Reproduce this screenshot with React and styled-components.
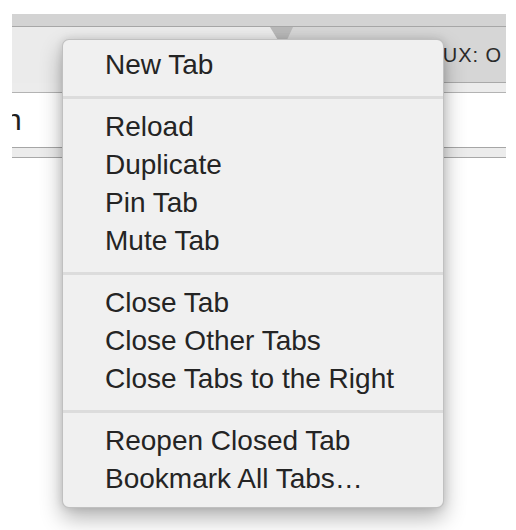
import React from 'react'
import styled, { createGlobalStyle } from 'styled-components'

const GlobalStyle = createGlobalStyle`
  html, body {
    margin: 0;
    background: #ffffff;
    font-family: "Liberation Sans", Arial, sans-serif;
  }
`

const Page = styled.div`
  position: relative;
  width: 516px;
  height: 530px;
  overflow: hidden;
  background: #ffffff;
`

const Browser = styled.div`
  margin: 14px 10px 0 12px;
  width: 494px;
`

const TitleBand = styled.div`
  height: 12px;
  background: #d3d3d3;
  border-bottom: 1px solid #a7a7a7;
`

const TabRow = styled.div`
  display: flex;
  height: 56px;
  background: #b9b9b9;
`

const ActiveTab = styled.div`
  position: relative;
  z-index: 1;
  flex: 0 0 292px;
  background: #ebebeb;
  clip-path: polygon(0 0, 258px 0, 100% 100%, 0 100%);
`

const InactiveTab = styled.div`
  flex: 1;
  min-width: 0;
  margin-left: -37px;
  box-sizing: border-box;
  display: flex;
  align-items: center;
  padding: 2px 4px 0 92px;
  background: #d6d6d6;
  border-bottom: 1px solid #a9a9a9;
  clip-path: polygon(26px 0, 100% 0, 100% 100%, 0 100%);
`

const TabTitle = styled.span`
  flex: 1;
  min-width: 0;
  overflow: hidden;
  white-space: nowrap;
  font-size: 20px;
  letter-spacing: 1px;
  color: #2b2b2b;
`

const Toolbar = styled.div`
  background: #ececec;
  padding-top: 9px;
`

const AddressBar = styled.div`
  display: flex;
  align-items: center;
  height: 54px;
  background: #ffffff;
  border-top: 1px solid #b3b3b3;
  border-bottom: 1px solid #a6a6a6;
  overflow: hidden;
`

const UrlText = styled.span`
  margin-left: -7px;
  font-size: 30px;
  color: #1f1f1f;
`

const ToolbarFoot = styled.div`
  height: 9px;
  background: #ececec;
  border-bottom: 1px solid #a8a8a8;
`

const Menu = styled.div`
  position: absolute;
  z-index: 5;
  left: 62px;
  top: 39px;
  width: 382px;
  box-sizing: border-box;
  padding: 6px 0 9px;
  background: #f0f0f0;
  border: 1px solid rgba(0, 0, 0, 0.2);
  border-radius: 7px;
  box-shadow: 0 10px 22px rgba(0, 0, 0, 0.3), 0 0 8px rgba(0, 0, 0, 0.12);
`

const Item = styled.div`
  height: 38px;
  line-height: 38px;
  padding-left: 42px;
  font-size: 28px;
  color: #242424;
  white-space: nowrap;
`

const Separator = styled.div`
  height: 3px;
  margin: 12px 0 9px;
  background: #dcdcdc;
`

const sections = [
  ['New Tab'],
  ['Reload', 'Duplicate', 'Pin Tab', 'Mute Tab'],
  ['Close Tab', 'Close Other Tabs', 'Close Tabs to the Right'],
  ['Reopen Closed Tab', 'Bookmark All Tabs…'],
]

const App = () => (
  <Page>
    <GlobalStyle />
    <Browser>
      <TitleBand />
      <TabRow>
        <ActiveTab />
        <InactiveTab>
          <TabTitle>Chrome UX: Options</TabTitle>
        </InactiveTab>
      </TabRow>
      <Toolbar>
        <AddressBar>
          <UrlText>n</UrlText>
        </AddressBar>
        <ToolbarFoot />
      </Toolbar>
    </Browser>

    <Menu>
      {sections.map((group, i) => (
        <React.Fragment key={i}>
          {i > 0 && <Separator />}
          {group.map(label => (
            <Item key={label}>{label}</Item>
          ))}
        </React.Fragment>
      ))}
    </Menu>
  </Page>
)

export default App
